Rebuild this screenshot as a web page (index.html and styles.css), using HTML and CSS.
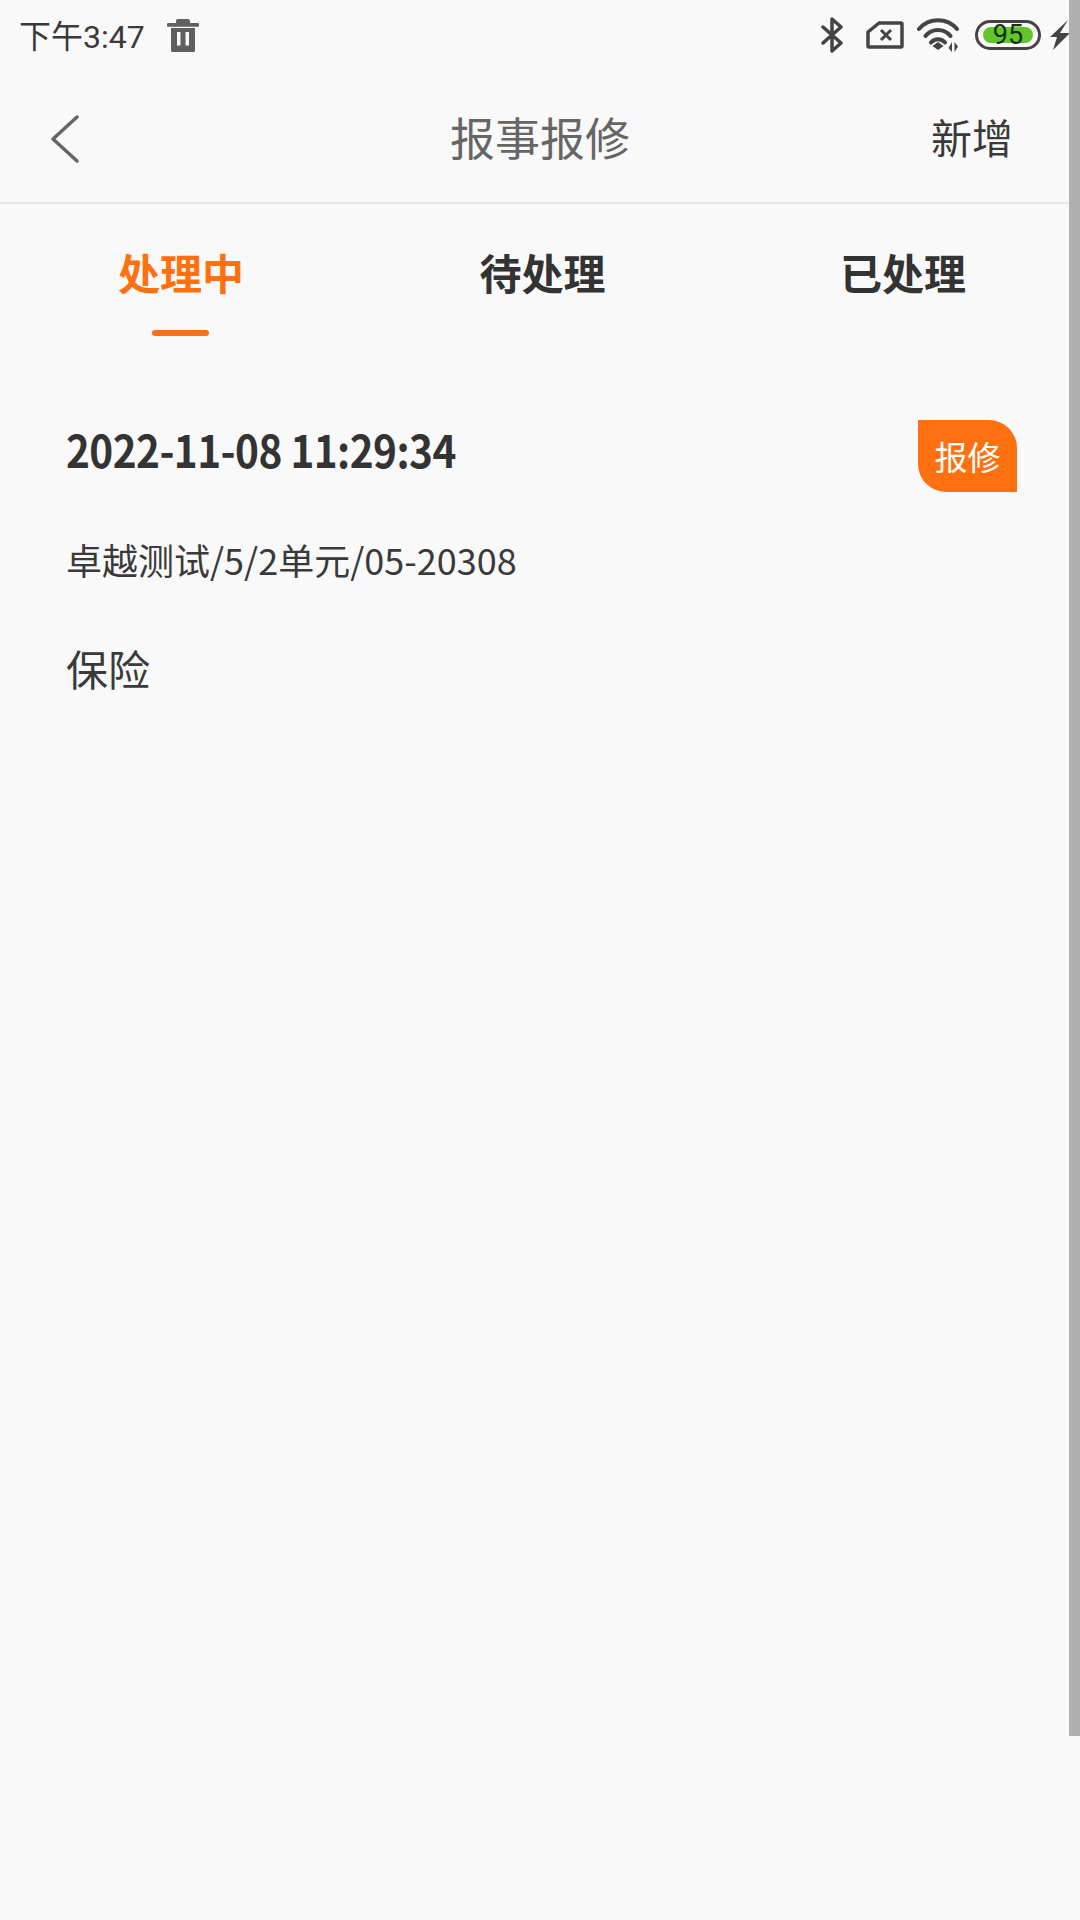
FILE: index.html
```html
<!DOCTYPE html>
<html lang="zh-CN">
<head>
  <meta charset="UTF-8">
  <title>报事报修</title>
  <link rel="stylesheet" href="styles.css">
</head>
<body>
  <div class="statusbar">
    <div class="status-left">
      <span class="time">下午3:47</span>
      <svg class="ic-trash" width="32" height="34" viewBox="0 0 32 34">
        <path fill="#5f5f5f" d="M11 1h10a2 2 0 0 1 2 2v2h7.500a1.700 1.700 0 0 1 0 3.800H1.500a1.700 1.700 0 0 1 0-3.800H9V3a2 2 0 0 1 2-2z"/>
        <path fill="#5f5f5f" fill-rule="evenodd" d="M4 10h24v22.500a1.500 1.500 0 0 1-1.500 1.500h-21A1.500 1.500 0 0 1 4 32.500zM10 14v13.500h3.500V14zM18.500 14v13.500H22V14z"/>
      </svg>
    </div>
    <div class="status-right">
      <svg class="ic-bt" width="22" height="36" viewBox="0 0 22 36">
        <path fill="none" stroke="#444" stroke-width="3.500" stroke-linecap="round" stroke-linejoin="round" d="M2 10l18 16-9 8V2l9 8L2 26"/>
      </svg>
      <svg class="ic-sim" width="38" height="30" viewBox="0 0 38 30">
        <path fill="none" stroke="#444" stroke-width="3.500" stroke-linejoin="round" d="M13 3h22a1 1 0 0 1 1 1v22a1 1 0 0 1-1 1H3a1 1 0 0 1-1-1V12z"/>
        <path fill="none" stroke="#444" stroke-width="3" d="M15 10l10 10M25 10L15 20"/>
      </svg>
      <svg class="ic-wifi" width="44" height="34" viewBox="0 0 44 34">
        <path fill="none" stroke="#444" stroke-width="4" stroke-linecap="round" d="M2 11a25 25 0 0 1 38 0M8.500 18a16 16 0 0 1 25 0M14 24.500a9 9 0 0 1 14 0"/>
        <path fill="#444" d="M21 24l5.500 4-5.500 4-5.500-4z"/>
        <path fill="#444" d="M35 24v10l-3.500-4zM37.500 24v10l3.500-5.500z"/>
      </svg>
      <div class="battery"><div class="battery-fill">95</div></div>
      <svg class="ic-bolt" width="20" height="30" viewBox="0 0 20 30">
        <path fill="#444" d="M18 0L10 13h10L3 30l4-13H0z"/>
      </svg>
    </div>
  </div>

  <div class="navbar">
    <svg class="back" width="28" height="48" viewBox="0 0 28 48">
      <path fill="none" stroke="#666" stroke-width="3.500" stroke-linecap="round" stroke-linejoin="round" d="M26 2L2 24l24 22"/>
    </svg>
    <div class="nav-title">报事报修</div>
    <div class="nav-action">新增</div>
  </div>

  <div class="tabs">
    <div class="tab active">处理中</div>
    <div class="tab">待处理</div>
    <div class="tab">已处理</div>
  </div>

  <div class="card">
    <div class="card-head">
      <div class="card-date">2022-11-08 11:29:34</div>
      <div class="badge">报修</div>
    </div>
    <div class="card-addr">卓越测试/5/2单元/05-20308</div>
    <div class="card-type">保险</div>
  </div>

  <div class="scrollbar"></div>
</body>
</html>
```

FILE: styles.css
```css
html, body { margin: 0; height: 1920px; overflow: hidden; }
body { background: #f9f9f9; color: #333; font-family: "Noto Sans CJK SC", "Noto Sans", sans-serif; position: relative; }

.scrollbar { position: absolute; top: 0; right: 0; width: 11px; height: 1736px; background: #b0b0b0; }

.statusbar { height: 70px; display: flex; justify-content: space-between; align-items: center; padding: 0 10px 0 19px; }
.status-left { display: flex; align-items: center; gap: 22px; }
.time { font-family: Roboto, "Noto Sans CJK SC", sans-serif; font-size: 32px; color: #3a3a3a; line-height: 36px; padding-top: 3px; }
.status-right { display: flex; align-items: center; }
.ic-sim { margin-left: 23px; }
.ic-wifi { margin-left: 13px; }
.battery { margin-left: 14px; width: 66px; height: 30px; box-sizing: border-box; border: 3px solid #444; border-radius: 15px; padding: 4px 5px; }
.battery-fill { width: 100%; height: 100%; background: #63c52c; border-radius: 8px; font-family: Roboto, sans-serif; font-size: 27px; line-height: 16px; text-align: center; color: #14300a; }
.ic-bolt { margin-left: 9px; }

.navbar { height: 134px; box-sizing: border-box; border-bottom: 2px solid #e8e8e8; display: flex; align-items: center; justify-content: space-between; position: relative; padding: 0 67px 0 51px; }
.back { margin-top: 5px; }
.nav-title { position: absolute; left: 0; right: 0; text-align: center; font-size: 45px; color: #666; }
.nav-action { font-size: 41px; color: #3a3a3a; }

.tabs { display: grid; grid-template-columns: 362px 361px 360px; height: 132px; }
.tab { position: relative; text-align: center; font-size: 42px; font-weight: 700; color: #333; line-height: 56px; padding-top: 40px; }
.tab.active { color: #ff7010; }
.tab.active::after { content: ""; position: absolute; left: 152px; top: 126px; width: 57px; height: 6px; border-radius: 3px; background: #ff7010; }

.card { padding: 84px 63px 0 66px; }
.card-head { display: flex; justify-content: space-between; align-items: center; height: 72px; }
.card-date { font-size: 45px; font-weight: 700; color: #333; letter-spacing: -0.6px; line-height: 58px; padding-bottom: 14px; transform: scaleX(0.9); transform-origin: left center; }
.badge { width: 99px; height: 72px; background: #ff7010; color: #fff; font-size: 33px; line-height: 72px; text-align: center; border-radius: 0 28px 0 28px; }
.card-addr { margin-top: 42px; font-size: 36px; color: #3a3a3a; line-height: 50px; }
.card-type { margin-top: 56px; font-size: 42px; color: #3a3a3a; line-height: 56px; }
```
